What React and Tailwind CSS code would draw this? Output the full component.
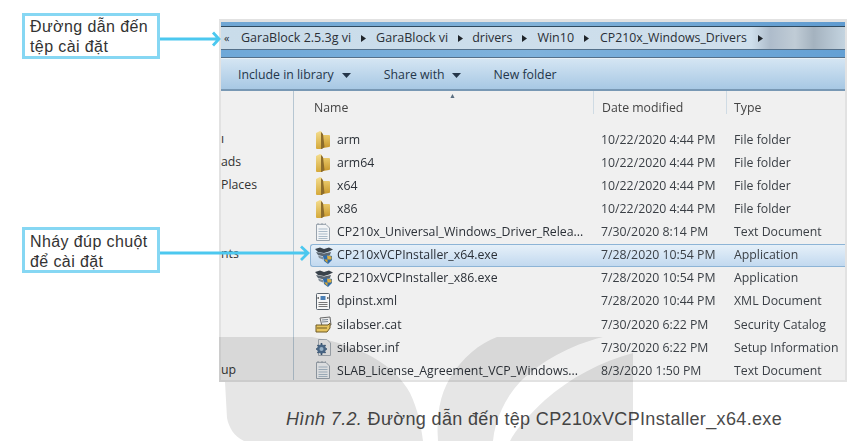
import React from "react";

function Folder() {
  return (
    <svg width="16" height="20" viewBox="0 0 16 20" className="blur-[0.4px]">
      <defs>
        <linearGradient id="fa" x1="0" y1="0" x2="0" y2="1">
          <stop offset="0" stopColor="#f4dd8e" />
          <stop offset="1" stopColor="#d5a93a" />
        </linearGradient>
        <linearGradient id="fb" x1="0" y1="0" x2="0" y2="1">
          <stop offset="0" stopColor="#e9c868" />
          <stop offset="1" stopColor="#c9982c" />
        </linearGradient>
      </defs>
      <path d="M1 3 L5 1 L7 2 L7 19 L2 19 Q1 19 1 18 Z" fill="url(#fa)" />
      <path d="M8 5 L14 5 Q15 5 15 6 L15 16 Q15 17 14 17 L8 18 Z" fill="url(#fb)" />
      <path d="M6 2 L8 4 L9.500 17 L7 19 L6 19 Z" fill="#8c6c2c" />
    </svg>
  );
}
function Doc() {
  return (
    <svg width="16" height="19" viewBox="0 0 16 19" className="blur-[0.4px]">
      <path d="M1.500 1.500 H11 L14.500 5 V17.500 H1.500 Z" fill="#f2f4f6" stroke="#99a3ad" />
      <path d="M1.500 1.500 L3 0.500 L5 1.500 L7 0.500 L9 1.500 L11 0.500" stroke="#a8b0b8" fill="none" />
      <path d="M3.500 6 H12.500 M3.500 8.500 H12.500 M3.500 11 H12.500 M3.500 13.500 H12.500 M3.500 15.500 H12.500" stroke="#a9bac9" />
    </svg>
  );
}
function Exe() {
  return (
    <svg width="18" height="17" viewBox="0 0 18 17" className="blur-[0.5px]">
      <path d="M0 2 L5 0.500 L9 2 L14 0.500 L18 2.500 L14 4.500 L9 6 L3 5 Z" fill="#39424b" />
      <path d="M1 5 L9 6.500 L16 5 L15 8 L9 9.500 L3 8 Z" fill="#5c6772" />
      <path d="M3 8.500 L8 10 L8 12.500 L4 11 Z" fill="#838e98" />
      <path d="M8 9 L12 8 L17 9 L17 13 L13 17 L9 14 Z" fill="#2e6aa8" />
      <path d="M12 8.500 L16.500 9.500 L16.500 12.500 L12.500 12.500 Z" fill="#dcae40" />
      <path d="M9 12.500 L12.500 12.500 L12.500 16 Z" fill="#d7a630" />
    </svg>
  );
}
function Xml() {
  return (
    <svg width="16" height="19" viewBox="0 0 16 19" className="blur-[0.4px]">
      <rect x="1.500" y="1.500" width="13" height="16" rx="1" fill="#f6f6f6" stroke="#59636d" />
      <rect x="5.500" y="4" width="5" height="4" fill="#4a7fb5" />
      <path d="M3.500 5 L2.800 6 L3.500 7 M12.500 5 L13.200 6 L12.500 7" stroke="#333" fill="none" />
      <path d="M3.500 10.500 H12.500 M3.500 12.500 H12.500 M3.500 14.500 H12.500" stroke="#777" />
    </svg>
  );
}
function Cat() {
  return (
    <svg width="18" height="18" viewBox="0 0 18 18" className="blur-[0.4px]">
      <path d="M5 2 L15 1 L16 9 L7 10 Z" fill="#ececec" stroke="#666" />
      <path d="M7 4 L13 3.500 M7 6 L13 5.500" stroke="#7d8994" />
      <path d="M1 9 H13 L15 7 V12 L12 16 H1 Z" fill="#e6c45f" stroke="#6f5a25" />
      <path d="M2 12 H12" stroke="#6f5a25" />
    </svg>
  );
}
function Inf() {
  return (
    <svg width="17" height="19" viewBox="0 0 17 19" className="blur-[0.5px]">
      <path d="M3.500 1.500 H12 L15.500 5 V17.500 H3.500 Z" fill="#f0f0f0" stroke="#a5adb5" />
      <path d="M1 11 H12 M6.500 5 V17 M2.500 7 L10.500 15 M10.500 7 L2.500 15" stroke="#3d5a78" strokeWidth="1.600" />
      <circle cx="6.500" cy="11" r="4.500" fill="#4f6f91" />
      <circle cx="6.500" cy="11" r="2" fill="#a8c4dc" />
    </svg>
  );
}
function Crumb({ cls }) {
  return (
    <svg width="5" height="7" viewBox="0 0 5 7" className={cls}>
      <path d="M0 0 L5 3.500 L0 7 Z" fill="#1f242a" />
    </svg>
  );
}
function Caret({ cls }) {
  return (
    <svg width="9" height="5" viewBox="0 0 9 5" className={cls}>
      <path d="M0 0 H9 L4.500 5 Z" fill="#24364a" />
    </svg>
  );
}

const rows = [
  { icon: <Folder />, name: "arm", date: "10/22/2020 4:44 PM", type: "File folder", side: "ı" },
  { icon: <Folder />, name: "arm64", date: "10/22/2020 4:44 PM", type: "File folder", side: "ads" },
  { icon: <Folder />, name: "x64", date: "10/22/2020 4:44 PM", type: "File folder", side: "Places" },
  { icon: <Folder />, name: "x86", date: "10/22/2020 4:44 PM", type: "File folder", side: "" },
  { icon: <Doc />, name: "CP210x_Universal_Windows_Driver_Relea...", date: "7/30/2020 8:14 PM", type: "Text Document", side: "" },
  { icon: <Exe />, name: "CP210xVCPInstaller_x64.exe", date: "7/28/2020 10:54 PM", type: "Application", side: "nts", selected: true },
  { icon: <Exe />, name: "CP210xVCPInstaller_x86.exe", date: "7/28/2020 10:54 PM", type: "Application", side: "" },
  { icon: <Xml />, name: "dpinst.xml", date: "7/28/2020 10:44 PM", type: "XML Document", side: "" },
  { icon: <Cat />, name: "silabser.cat", date: "7/30/2020 6:22 PM", type: "Security Catalog", side: "" },
  { icon: <Inf />, name: "silabser.inf", date: "7/30/2020 6:22 PM", type: "Setup Information", side: "" },
  { icon: <Doc />, name: "SLAB_License_Agreement_VCP_Windows...", date: "8/3/2020 1:50 PM", type: "Text Document", side: "up" },
];

export default function App() {
  return (
    <div className="relative w-[864px] h-[441px] overflow-hidden bg-white pt-[19px] pl-[219px] font-['Open_Sans',sans-serif]">
      {/* Window */}
      <div className="w-[628px] h-[363px] flex flex-col bg-[#f0f0f0] border-x-2 border-t-[3px] border-b-[2px] border-[#e2e2e2] text-[12.3px] blur-[0.5px]">
        <div className="h-[4px] bg-gradient-to-r from-[#6fa6d4] via-[#82b2d8] to-[#5f9bd0] border-b border-[#2e4a60] box-content" />
        <div className="h-[22px] flex items-center pl-[3px] text-[#2a2f36] bg-[linear-gradient(90deg,#c9dcea_0%,#cfdfec_85%,#aebccb_88%,#c0ccd6_92%,#a4b2bf_95%,#c4d4e0_100%)]">
          <span className="w-[17px] text-[11px]">«</span>
          <span className="text-[12.5px]">GaraBlock 2.5.3g vi</span>
          <Crumb cls="mx-[10px]" />
          <span className="text-[12.5px]">GaraBlock vi</span>
          <Crumb cls="ml-[10px] mr-[9px]" />
          <span className="text-[12.5px]">drivers</span>
          <Crumb cls="ml-[10px] mr-[10px]" />
          <span className="text-[12.5px]">Win10</span>
          <Crumb cls="ml-[10px] mr-[11px]" />
          <span>CP210x_Windows_Drivers</span>
          <Crumb cls="ml-[11px]" />
        </div>
        <div className="h-[9px] bg-gradient-to-r from-[#6fa8d8] via-[#7fb2dc] to-[#64a0d4] border-y border-[#54708a]" />
        <div className="h-[1px] bg-[#e8f0f6]" />
        <div className="h-[32px] flex items-center pl-[17px] pt-[3px] text-[#24364a] bg-gradient-to-b from-[#d4e5f3] to-[#a7c8e4] border-b-2 border-[#7898b4]">
          <span>Include in library</span>
          <Caret cls="ml-[8px]" />
          <span className="ml-[33px]">Share with</span>
          <Caret cls="ml-[7px]" />
          <span className="ml-[33px]">New folder</span>
        </div>
        <div className="flex-1 flex min-h-0">
          <div className="w-[73px] shrink-0 border-r border-[#b6c6d2] overflow-hidden text-[#333] pt-[36px]">
            {rows.map((r, i) => (
              <div key={i} className="h-[23.100px] leading-[23px] whitespace-nowrap">{r.side || "\u00a0"}</div>
            ))}
          </div>
          <div className="flex-1 min-w-0 text-[#3a3f45]">
            <div className="relative h-[37.500px] flex text-[#444]">
              <span className="absolute left-[155px] top-0 text-[7px] text-[#5a6e80]">▲</span>
              <div className="w-[300px] pl-[20px] pt-[8px] border-r border-[#cfdbe4] h-[23px]">Name</div>
              <div className="w-[133px] pl-[8px] pt-[8px] border-r border-[#cfdbe4] h-[23px]">Date modified</div>
              <div className="pl-[7px] pt-[8px]">Type</div>
            </div>
            {rows.map((r) => (
              <div
                key={r.name}
                className={
                  r.selected
                    ? "ml-[16px] h-[23.100px] grid grid-cols-[22px_264px_133px_1fr] items-center pl-[4px] border border-r-0 border-[#8db4d6] rounded-l-[3px] bg-gradient-to-b from-[#e6f0f9] to-[#c2d9ef]"
                    : "ml-[16px] h-[23.100px] grid grid-cols-[22px_264px_133px_1fr] items-center pl-[4px] border border-transparent"
                }
              >
                <span className="flex items-center">{r.icon}</span>
                <span className="text-[#2c3138] whitespace-nowrap">{r.name}</span>
                <span className="whitespace-nowrap">{r.date}</span>
                <span className="whitespace-nowrap">{r.type}</span>
              </div>
            ))}
          </div>
        </div>
      </div>

      {/* Caption */}
      <p className="mt-[25px] ml-[67px] whitespace-nowrap text-[#4a4a4a] text-[18px] tracking-[0.35px] leading-[24px] font-['Liberation_Sans',sans-serif]">
        <i>Hình 7.2.</i> Đường dẫn đến tệp CP210xVCPInstaller_x64.exe
      </p>

      {/* Watermark */}
      <svg className="absolute left-0 top-0 mix-blend-multiply pointer-events-none" width="864" height="441" viewBox="0 0 864 441">
        <path d="M219 337 H312 C360 345 395 365 410 393 C418 410 421 425 423 441 H244 C234 436 229 428 227 418 L225 382 H219 Z" fill="#e6e6e6" />
        <path d="M438 441 C436 415 440 395 450 378 C462 358 480 343 497 337 H603 C570 345 540 362 520 382 C505 398 495 420 493 441 Z" fill="#e6e6e6" />
        <path d="M633 353 C600 362 570 378 545 400 C530 414 515 430 510 441 H633 Z" fill="#e6e6e6" />
      </svg>

      {/* Callouts */}
      <div className="absolute left-[22px] top-[13px] w-[138px] h-[46px] border-[3px] border-[#86d7f3] bg-white pl-[5px] pt-[1px] text-[#333] text-[16px] leading-[20px] tracking-[0.4px] font-['Liberation_Sans',sans-serif] flex flex-col justify-center">
        <span>Đường dẫn đến</span>
        <span>tệp cài đặt</span>
      </div>
      <div className="absolute left-[22px] top-[227px] w-[138px] h-[46px] border-[3px] border-[#86d7f3] bg-white pl-[5px] pt-[3px] text-[#333] text-[16px] leading-[20px] tracking-[0.4px] font-['Liberation_Sans',sans-serif] flex flex-col justify-center">
        <span>Nháy đúp chuột</span>
        <span>để cài đặt</span>
      </div>

      {/* Arrows */}
      <svg className="absolute left-0 top-0 pointer-events-none" width="864" height="441" viewBox="0 0 864 441">
        <path d="M160 39 H218 M213 32.500 L219 39 L213 45.500" stroke="#4cc8ef" strokeWidth="2.800" fill="none" />
        <path d="M160 253 H307 M301 246.500 L308 253 L301 260" stroke="#4cc8ef" strokeWidth="2.800" fill="none" />
      </svg>
    </div>
  );
}
